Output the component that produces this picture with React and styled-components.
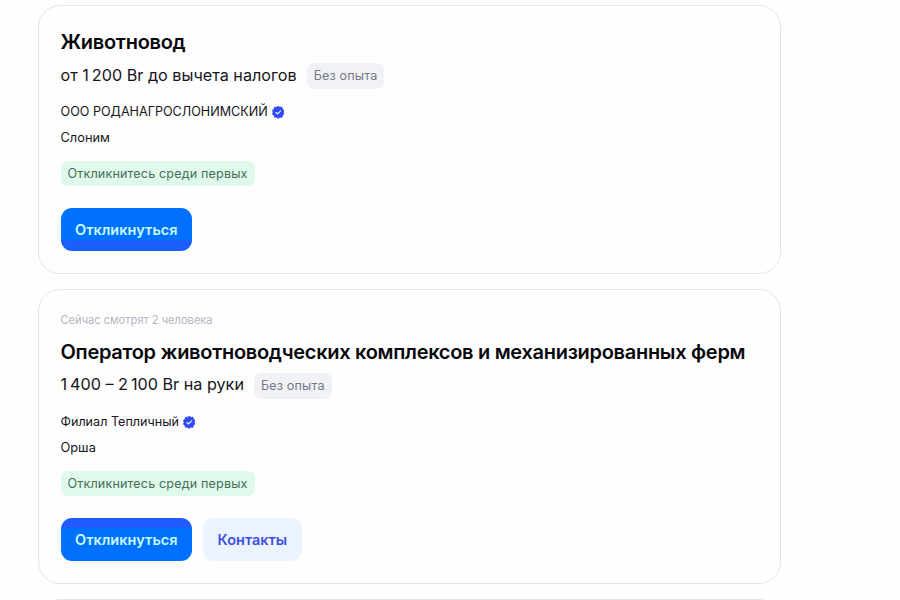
import React from "react";
import styled, { createGlobalStyle } from "styled-components";

const vacancies = [
  {
    title: "Животновод",
    salary: "от 1\u2009200 Br до вычета налогов",
    company: "ООО РОДАНАГРОСЛОНИМСКИЙ",
    city: "Слоним",
    fill: "linear-gradient(#0070ff 75%, #1a60ff 75%)",
  },
  {
    viewers: "Сейчас смотрят 2 человека",
    title: "Оператор животноводческих комплексов и механизированных ферм",
    salary: "1\u2009400 – 2\u2009100 Br на руки",
    company: "Филиал Тепличный",
    city: "Орша",
    contacts: true,
    fill: "linear-gradient(#205cff 24%, #0070ff 24%)",
  },
];

const VerifiedIcon = () => (
  <Badge viewBox="0 0 24 24">
    <path
      d="M12 0l3.2 2.2 3.9-.1 1.1 3.7L23.4 8.2 22.1 12l1.3 3.8-3.2 2.4-1.1 3.7-3.9-.1L12 24l-3.2-2.2-3.9.1-1.1-3.7L.6 15.8 1.9 12 .6 8.2l3.2-2.4L4.9 2.1l3.9.1z"
      fill="#3048f5"
      stroke="#3048f5"
      strokeLinejoin="round"
    />
    <path
      d="M7.5 12.5l3 2.8 6-6"
      fill="none"
      stroke="#d8f4ff"
      strokeWidth="2.3"
      strokeLinecap="round"
      strokeLinejoin="round"
    />
  </Badge>
);

const VacancyCard = ({ vacancy }) => {
  const { viewers, title, salary, company, city, contacts, fill } = vacancy;
  return (
    <Card>
      {viewers && <Viewers>{viewers}</Viewers>}
      <Title>{title}</Title>
      <SalaryRow>
        <Salary>{salary}</Salary>
        <Tag>Без опыта</Tag>
      </SalaryRow>
      <Company>
        {company}
        <VerifiedIcon />
      </Company>
      <City>{city}</City>
      <Tag $green>Откликнитесь среди первых</Tag>
      <Actions>
        <Button $fill={fill}>Откликнуться</Button>
        {contacts && <Button $secondary>Контакты</Button>}
      </Actions>
    </Card>
  );
};

const App = () => {
  return (
    <>
      <GlobalStyle />
      <Page>
        {vacancies.map((vacancy) => (
          <VacancyCard key={vacancy.title} vacancy={vacancy} />
        ))}
        <Card />
      </Page>
    </>
  );
};

export default App;

const GlobalStyle = createGlobalStyle`
  * {
    box-sizing: border-box;
  }

  body {
    margin: 0;
    background: #fefefe;
    color: #15151a;
    font-family: Inter, "Liberation Sans", sans-serif;
  }
`;

const Page = styled.main`
  display: flex;
  flex-direction: column;
  gap: 15px;
  height: 600px;
  padding: 4.5px 0 0 37.5px;
  overflow: hidden;
`;

const Card = styled.article`
  display: flex;
  flex: none;
  flex-direction: column;
  align-items: flex-start;
  width: 743.5px;
  min-height: 60px;
  padding: 21.5px 22px;
  border: 1px solid #e0e5ec;
  border-radius: 22px;
  background: #fefefe;
`;

const Viewers = styled.div`
  margin-bottom: 6.5px;
  color: #b6b5c3;
  font-size: 11.1px;
  line-height: 19px;
`;

const Title = styled.h2`
  margin: 0;
  padding-top: 1px;
  color: #08080c;
  font-size: 20px;
  font-weight: 600;
  letter-spacing: -0.29px;
  line-height: 29px;
  white-space: nowrap;
`;

const SalaryRow = styled.div`
  display: flex;
  align-items: center;
  gap: 10px;
  margin-top: 6.3px;
`;

const Salary = styled.span`
  padding-bottom: 3px;
  font-size: 16.2px;
  line-height: 22px;
  white-space: nowrap;
`;

const Tag = styled.span`
  padding: 0 7px;
  border-radius: 7px;
  background: ${({ $green }) => ($green ? "#dff9ea" : "#f0f2f7")};
  color: ${({ $green }) => ($green ? "#476e5c" : "#767985")};
  font-size: 12.6px;
  letter-spacing: 0.14px;
  line-height: 25.5px;
  white-space: nowrap;
`;

const Company = styled.div`
  display: flex;
  align-items: center;
  gap: 4px;
  margin-top: 12.6px;
  font-size: 12.6px;
  line-height: 22px;
`;

const Badge = styled.svg`
  width: 12.5px;
  height: 12.5px;
`;

const City = styled.div`
  margin: 3.5px 0 12px;
  font-size: 12.8px;
  line-height: 22px;
`;

const Actions = styled.div`
  display: flex;
  gap: 11px;
  margin-top: 21.5px;
`;

const Button = styled.button`
  height: 43.5px;
  padding: 0 14.5px;
  border: 0;
  border-radius: 11px;
  background: ${({ $secondary, $fill }) => ($secondary ? "#ebf3ff" : $fill)};
  color: ${({ $secondary }) => ($secondary ? "#3d4fdf" : "#c6fbff")};
  font-family: inherit;
  font-size: 14.5px;
  font-weight: 600;
  white-space: nowrap;
`;
